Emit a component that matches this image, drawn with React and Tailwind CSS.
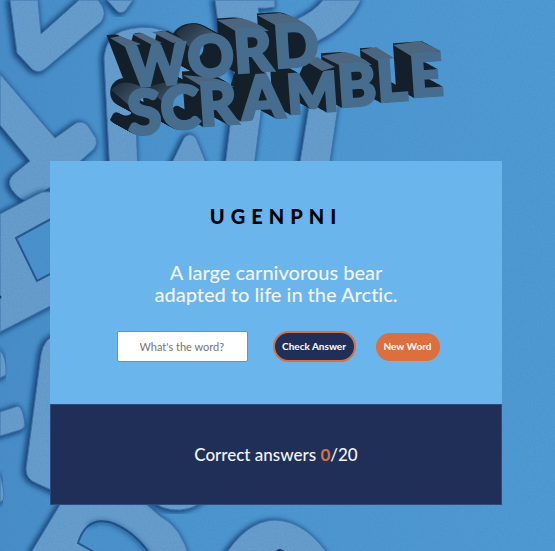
import React from "react";

const logoLetters = [
  { c: "W", x: 130, y: 87, s: 56 },
  { c: "O", x: 190, y: 78, s: 57 },
  { c: "R", x: 236, y: 73, s: 59 },
  { c: "D", x: 276, y: 68, s: 59 },
  { c: "S", x: 130, y: 135, s: 61 },
  { c: "C", x: 163, y: 130, s: 59 },
  { c: "R", x: 201, y: 126, s: 59 },
  { c: "A", x: 244, y: 120, s: 60 },
  { c: "M", x: 289, y: 114, s: 54 },
  { c: "B", x: 340, y: 107, s: 58 },
  { c: "L", x: 379, y: 102, s: 58 },
  { c: "E", x: 412, y: 97, s: 58 },
];

const depth = Array.from({ length: 18 }, (_, i) => 18 - i);

function Logo() {
  return (
    <svg viewBox="109 0 336 161" className="h-[161px] w-[336px] overflow-visible" role="img" aria-label="Word Scramble">
      <defs>
        <g id="logo-face">
          {logoLetters.map((l, i) => (
            <text
              key={i}
              x={l.x}
              y={l.y}
              fontSize={l.s}
              transform={`rotate(-4 ${l.x} ${l.y})`}
              className="font-[Lato,sans-serif] font-black"
              stroke="currentColor"
              strokeWidth="3"
              fill="currentColor"
            >
              {l.c}
            </text>
          ))}
        </g>
        <linearGradient id="roundTop" x1="0" x2="1" y1="0" y2="0.5">
          <stop offset="0" stopColor="#1b2935" />
          <stop offset="1" stopColor="#4b657c" />
        </linearGradient>
      </defs>
      <g className="text-[#14202a]">
        {depth.map((d) => (
          <use key={d} href="#logo-face" x={-d} y={-d * 0.55} />
        ))}
      </g>
      <g fill="#4b667e">
        <path d="M111 38 L121 36 L142 44 L128 48Z" />
        <path d="M133 34 L143 33 L163 43 L153 45Z" />
        <path d="M153 32 L166 31 L187 41 L174 43Z" />
        <path d="M218 20 L241 18 Q254 20 270 31 L238 32Z" />
        <path d="M258 15 L281 13 Q296 15 312 28 L278 26Z" />
        <path d="M184 75 L205 77 Q220 77 235 87 L202 86Z" />
        <path d="M322 56 L345 52 Q360 54 373 65 L342 66Z" />
        <path d="M361 50 L377 47 L395 58 L379 61Z" />
        <path d="M394 45 L421 41 L442 51 L412 56Z" />
        <path d="M305 60 L318 57 L336 67 L323 71Z" />
      </g>
      <g fill="url(#roundTop)">
        <path d="M177 33 Q190 18 207 28 L228 40 Q205 31 192 49Z" />
        <path d="M112 90 Q122 78 138 85 L160 94 Q136 90 131 106Z" />
        <path d="M148 88 Q164 80 183 83 L200 90 Q173 83 165 103Z" />
      </g>
      <use href="#logo-face" className="text-[#466c8e]" />
    </svg>
  );
}

const woodShapes = [
  "M10 0L17 53L32 69Q38 74 45 69L101 22Q107 14 102 5L98 0H79L41 34L38 0Z",
  "M107 0L117 11Q121 15 126 10L133 0Z",
  "M215 0L219 30L240 90H276L258 8Q266 9 275 7V0Z",
  "M323 0Q315 11 295 20L285 60L318 41Q349 26 361 0Z",
  "M110 175L104 58Q106 36 122 31Q144 24 162 30Q190 40 200 70L175 90L136 120L138 175Z",
  "M166 175L184 138Q190 131 196 138L211 175Z",
  "M224 175L231 118L262 105L253 175Z",
  "M298 175L310 100L339 100L328 175Z",
  "M0 74L55 138L76 123Q83 120 88 126L96 138Q98 144 94 149L52 186L29 201Q21 202 12 190Q6 181 14 174L30 161L0 125Z",
  "M0 214L40 193Q46 190 60 194V301L0 332Z",
  "M0 350Q7 358 6 375L0 378Z",
  "M0 412L18 406Q23 407 25 425Q25 428 20 430L0 436Z",
  "M60 334Q44 336 41 355L26 469Q26 479 36 483L60 494Z",
  "M0 473Q4 490 4 495Q4 501 0 502Z",
  "M64 498L32 551V560H190Q182 527 160 516L140 498Z",
  "M222 560Q245 521 275 520Q307 521 332 560Z",
  "M148 498Q162 511 180 510Q195 509 207 498Z",
];

const woodOpenings = [
  "M16 238L37 281L60 269V214Z",
  "M78 543Q86 517 109 522Q135 530 154 560H108Z",
];

function WoodBackdrop() {
  return (
    <svg
      aria-hidden="true"
      viewBox="0 0 555 551"
      preserveAspectRatio="xMinYMin slice"
      className="absolute inset-0 h-full w-full"
    >
      <defs>
        <linearGradient id="table" x1="0" x2="1" y1="0" y2="0">
          <stop offset="0" stopColor="#488dc8" />
          <stop offset="0.35" stopColor="#4c95cf" />
          <stop offset="1" stopColor="#4f9ad4" />
        </linearGradient>
        <filter id="grain" x="0" y="0" width="100%" height="100%">
          <feTurbulence type="fractalNoise" baseFrequency="0.6" numOctaves="2" seed="4" />
          <feColorMatrix values="0 0 0 0 0.05  0 0 0 0 0.2  0 0 0 0 0.4  1 0 0 0 -0.35" />
        </filter>
        <filter id="soft" x="-20%" y="-20%" width="140%" height="140%">
          <feGaussianBlur stdDeviation="2.5" />
        </filter>
      </defs>
      <rect width="555" height="551" fill="url(#table)" />
      {woodShapes.map((d) => (
        <g key={d}>
          <path d={d} fill="#0e3468" stroke="#0e3468" strokeWidth="4" opacity="0.85" filter="url(#soft)" transform="translate(-2 1)" />
          <path d={d} fill="#679dcc" stroke="#3f74ad" strokeWidth="1" />
        </g>
      ))}
      {woodOpenings.map((d) => (
        <path key={d} d={d} fill="#4a92cc" stroke="#27548e" strokeWidth="2" />
      ))}
      <path d="M88 526Q98 519 112 524Q132 531 150 556" fill="none" stroke="#0e3468" strokeWidth="3" opacity="0.7" filter="url(#soft)" />
      <circle cx="0" cy="297" r="1.5" fill="#12305c" />
      <path d="M276 551Q279 547 284 551Z" fill="#12305c" />
      <rect width="555" height="551" filter="url(#grain)" opacity="0.4" />
    </svg>
  );
}

export default function App() {
  return (
    <div className="relative min-h-screen overflow-hidden bg-[#4b95cf] font-[Lato,sans-serif] [font-variant-ligatures:none]">
      <WoodBackdrop />
      <main className="relative pr-[53px] pl-[50px]">
        <h1 className="flex justify-center">
          <Logo />
        </h1>
        <section className="bg-[#6ab5eb] px-6 pt-10 pb-[42px] text-center">
          <h2 className="text-xl leading-[30px] font-black tracking-[6px] text-black">UGENPNI</h2>
          <p className="mx-auto mt-[30px] max-w-[270px] text-xl leading-[22px] font-medium text-[#f4f4f4]">
            A large carnivorous bear adapted to life in the Arctic.
          </p>
          <form className="mt-[26px] flex items-center justify-center pl-1" onSubmit={(e) => e.preventDefault()}>
            <input
              type="text"
              aria-label="What's the word?"
              placeholder="What's the word?"
              className="h-[31px] w-[131px] rounded-xs border border-[#8b8b8b] bg-white px-[22px] text-[11px] text-[#222] placeholder:text-[#757575]"
            />
            <button type="submit" className="ml-[25px] h-[31px] w-[83px] rounded-full border-2 border-[#dc6f3b] bg-[#202f58] text-[10px] font-bold text-white">
              Check Answer
            </button>
            <button type="button" className="ml-5 h-7 w-16 rounded-full bg-[#dc6f3b] text-[10px] font-bold text-white">
              New Word
            </button>
          </form>
        </section>
        <section className="border border-[#2c4a7c] bg-[#202f58] pt-[38px] pb-[37px] text-center text-[17px] leading-6 font-medium text-[#f4f4f4]">
          <p>
            Correct answers <span className="font-bold text-[#dc6f3b]">0</span>/20
          </p>
        </section>
      </main>
    </div>
  );
}
